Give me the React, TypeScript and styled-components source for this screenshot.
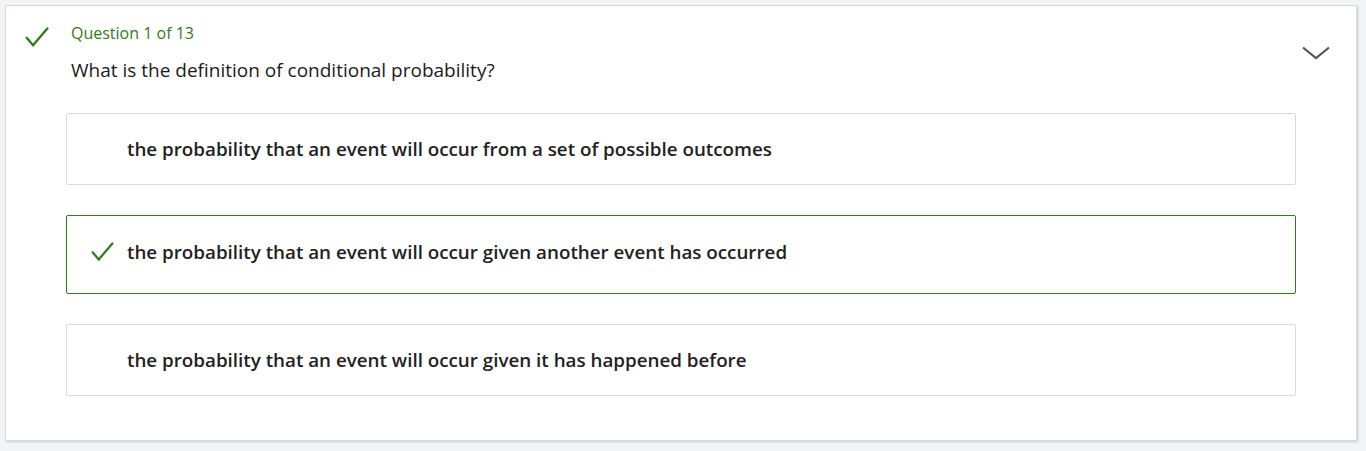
import React from "react";
import styled, { createGlobalStyle } from "styled-components";

const Global = createGlobalStyle`
  html, body { margin: 0; padding: 0; background: #f2f4f7; }
  body { font-family: "Open Sans", "Noto Sans", sans-serif; color: #1b1b1b; }
`;

const Page = styled.div`
  padding: 5px 9px 10px 5px;
`;

const Card = styled.section`
  background: #fff;
  border: 1px solid #dcdcdc;
  box-shadow: 1px 1px 2px rgba(0, 0, 0, 0.18);
  height: 436px;
  box-sizing: border-box;
  display: grid;
  grid-template-columns: 65px 1fr 60px;
  padding: 16px 0 0 0;
`;

const StatusIcon = styled.div`
  padding: 5px 0 0 19px;
`;

const Body = styled.div`
  display: flex;
  flex-direction: column;
`;

const Counter = styled.div`
  color: #2f7d14;
  font-size: 16px;
  line-height: 22px;
  margin-bottom: 12px;
`;

const QuestionText = styled.div`
  font-size: 19px;
  line-height: 28px;
  margin-bottom: 29px;
`;

const Options = styled.div`
  display: flex;
  flex-direction: column;
  gap: 30px;
  margin-left: -5px;
`;

const Option = styled.div<{ $correct?: boolean }>`
  box-sizing: border-box;
  height: ${(p) => (p.$correct ? 79 : 72)}px;
  border: 1px solid ${(p) => (p.$correct ? "#2f7d14" : "#dadada")};
  border-radius: 2px;
  display: flex;
  align-items: center;
  padding-left: 24px;
  padding-bottom: ${(p) => (p.$correct ? 5 : 0)}px;
  font-size: 18.8px;
  font-weight: 600;
  color: #222;
`;

const OptionMark = styled.span`
  width: 36px;
  display: inline-flex;
  align-items: center;
`;

const ChevronCell = styled.div`
  padding: 21px 0 0 6px;
`;

const Check = ({ size }: { size: number }) => (
  <svg width={size} height={size * 0.9} viewBox="0 0 24 22" fill="none">
    <path d="M1.5 11 L8 18.5 L22.5 1.5" stroke="#2f7d14" strokeWidth="2.4" strokeLinecap="round" strokeLinejoin="miter" />
  </svg>
);

const Chevron = () => (
  <svg width="28" height="14" viewBox="0 0 28 14" fill="none">
    <path d="M1 1.5 L14 12 L27 1.5" stroke="#555" strokeWidth="2.2" />
  </svg>
);

const options = [
  { text: "the probability that an event will occur from a set of possible outcomes" },
  { text: "the probability that an event will occur given another event has occurred", correct: true },
  { text: "the probability that an event will occur given it has happened before" },
];

export default function App() {
  return (
    <Page>
      <Global />
      <Card>
        <StatusIcon>
          <Check size={24} />
        </StatusIcon>
        <Body>
          <Counter>Question 1 of 13</Counter>
          <QuestionText>What is the definition of conditional probability?</QuestionText>
          <Options>
            {options.map((o) => (
              <Option key={o.text} $correct={o.correct}>
                <OptionMark>{o.correct && <Check size={23} />}</OptionMark>
                {o.text}
              </Option>
            ))}
          </Options>
        </Body>
        <ChevronCell>
          <Chevron />
        </ChevronCell>
      </Card>
    </Page>
  );
}
